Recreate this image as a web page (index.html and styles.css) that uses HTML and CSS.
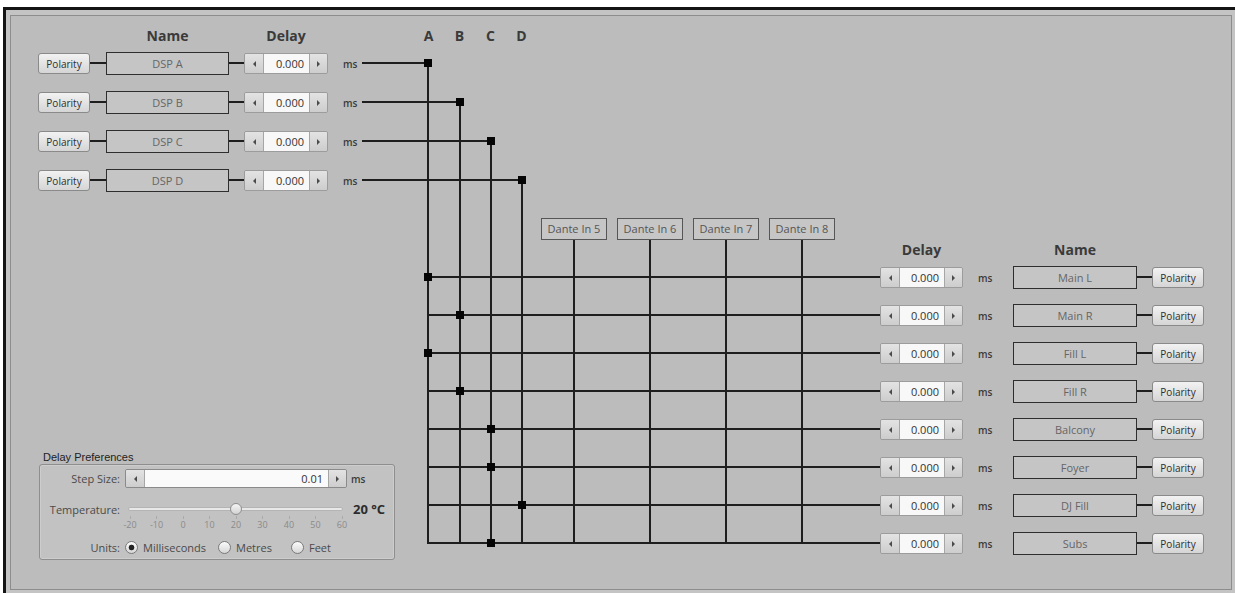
FILE: index.html
```html
<!DOCTYPE html>
<html>
<head>
    <title>Delay Matrix</title>
    <link rel="stylesheet" href="styles.css">
</head>
<body>
<div class="window">
    <div class="panel">
        <!-- routing wires, drawn in page coordinates -->
        <svg class="wires" width="1220" height="573" viewBox="11 16 1220 573">
            <g stroke="#1e1e1e" stroke-width="2" stroke-linecap="square" fill="none">
                <path d="M363 63H428 M363 102H460 M363 141H491 M363 180H522"/>
                <path d="M428 63V543 M460 102V543 M491 141V543 M522 180V543"/>
                <path d="M574 240V543 M650 240V543 M726 240V543 M802 240V543"/>
                <path d="M428 277H879 M428 315H879 M428 353H879 M428 391H879 M428 429H879 M428 467H879 M428 505H879 M428 543H879"/>
            </g>
            <g fill="#050505">
                <rect x="424" y="59" width="8" height="8"/>
                <rect x="456" y="98" width="8" height="8"/>
                <rect x="487" y="137" width="8" height="8"/>
                <rect x="518" y="176" width="8" height="8"/>
                <rect x="424" y="273" width="8" height="8"/>
                <rect x="456" y="311" width="8" height="8"/>
                <rect x="424" y="349" width="8" height="8"/>
                <rect x="456" y="387" width="8" height="8"/>
                <rect x="487" y="425" width="8" height="8"/>
                <rect x="487" y="463" width="8" height="8"/>
                <rect x="518" y="501" width="8" height="8"/>
                <rect x="487" y="539" width="8" height="8"/>
            </g>
        </svg>

        <div class="inputs">
            <div class="col-head">
                <span class="head-name">Name</span>
                <span class="head-delay">Delay</span>
            </div>
            <div class="chan-list">
                <div class="chan">
                    <button class="polarity">Polarity</button><span class="wire"></span>
                    <div class="name-box">DSP A</div><span class="wire"></span>
                    <div class="spin"><span class="arrow left"></span><span class="value">0.000</span><span class="arrow right"></span></div>
                    <span class="unit">ms</span>
                </div>
                <div class="chan">
                    <button class="polarity">Polarity</button><span class="wire"></span>
                    <div class="name-box">DSP B</div><span class="wire"></span>
                    <div class="spin"><span class="arrow left"></span><span class="value">0.000</span><span class="arrow right"></span></div>
                    <span class="unit">ms</span>
                </div>
                <div class="chan">
                    <button class="polarity">Polarity</button><span class="wire"></span>
                    <div class="name-box">DSP C</div><span class="wire"></span>
                    <div class="spin"><span class="arrow left"></span><span class="value">0.000</span><span class="arrow right"></span></div>
                    <span class="unit">ms</span>
                </div>
                <div class="chan">
                    <button class="polarity">Polarity</button><span class="wire"></span>
                    <div class="name-box">DSP D</div><span class="wire"></span>
                    <div class="spin"><span class="arrow left"></span><span class="value">0.000</span><span class="arrow right"></span></div>
                    <span class="unit">ms</span>
                </div>
            </div>

            <div class="prefs">
                <div class="prefs-title">Delay Preferences</div>
                <div class="prefs-box">
                    <div class="pref-row step-row">
                        <span class="pref-label">Step Size:</span>
                        <div class="spin step-spin"><span class="arrow left"></span><span class="value">0.01</span><span class="arrow right"></span></div>
                        <span class="unit step-unit">ms</span>
                    </div>
                    <div class="pref-row temp-row">
                        <span class="pref-label">Temperature:</span>
                        <div class="slider"><span class="track"></span><span class="thumb"></span></div>
                        <span class="temp-value">20 °C</span>
                    </div>
                    <div class="ticks">
                        <span class="tick"><i></i>-20</span>
                        <span class="tick"><i></i>-10</span>
                        <span class="tick"><i></i>0</span>
                        <span class="tick"><i></i>10</span>
                        <span class="tick"><i></i>20</span>
                        <span class="tick"><i></i>30</span>
                        <span class="tick"><i></i>40</span>
                        <span class="tick"><i></i>50</span>
                        <span class="tick"><i></i>60</span>
                    </div>
                    <div class="pref-row units-row">
                        <span class="pref-label">Units:</span>
                        <label class="radio opt-ms"><span class="dot checked"></span>Milliseconds</label>
                        <label class="radio opt-m"><span class="dot"></span>Metres</label>
                        <label class="radio"><span class="dot"></span>Feet</label>
                    </div>
                </div>
            </div>
        </div>

        <div class="bus">
            <div class="bus-head">
                <span>A</span><span>B</span><span>C</span><span>D</span>
            </div>
            <div class="dante-row">
                <div class="dante">Dante In 5</div>
                <div class="dante">Dante In 6</div>
                <div class="dante">Dante In 7</div>
                <div class="dante">Dante In 8</div>
            </div>
        </div>

        <div class="outputs">
            <div class="col-head">
                <span class="head-delay out">Delay</span>
                <span class="head-name out">Name</span>
            </div>
            <div class="chan-list out">
                <div class="chan">
                    <div class="spin"><span class="arrow left"></span><span class="value">0.000</span><span class="arrow right"></span></div>
                    <span class="unit">ms</span>
                    <div class="name-box out">Main L</div><span class="wire"></span>
                    <button class="polarity">Polarity</button>
                </div>
                <div class="chan">
                    <div class="spin"><span class="arrow left"></span><span class="value">0.000</span><span class="arrow right"></span></div>
                    <span class="unit">ms</span>
                    <div class="name-box out">Main R</div><span class="wire"></span>
                    <button class="polarity">Polarity</button>
                </div>
                <div class="chan">
                    <div class="spin"><span class="arrow left"></span><span class="value">0.000</span><span class="arrow right"></span></div>
                    <span class="unit">ms</span>
                    <div class="name-box out">Fill L</div><span class="wire"></span>
                    <button class="polarity">Polarity</button>
                </div>
                <div class="chan">
                    <div class="spin"><span class="arrow left"></span><span class="value">0.000</span><span class="arrow right"></span></div>
                    <span class="unit">ms</span>
                    <div class="name-box out">Fill R</div><span class="wire"></span>
                    <button class="polarity">Polarity</button>
                </div>
                <div class="chan">
                    <div class="spin"><span class="arrow left"></span><span class="value">0.000</span><span class="arrow right"></span></div>
                    <span class="unit">ms</span>
                    <div class="name-box out">Balcony</div><span class="wire"></span>
                    <button class="polarity">Polarity</button>
                </div>
                <div class="chan">
                    <div class="spin"><span class="arrow left"></span><span class="value">0.000</span><span class="arrow right"></span></div>
                    <span class="unit">ms</span>
                    <div class="name-box out">Foyer</div><span class="wire"></span>
                    <button class="polarity">Polarity</button>
                </div>
                <div class="chan">
                    <div class="spin"><span class="arrow left"></span><span class="value">0.000</span><span class="arrow right"></span></div>
                    <span class="unit">ms</span>
                    <div class="name-box out">DJ Fill</div><span class="wire"></span>
                    <button class="polarity">Polarity</button>
                </div>
                <div class="chan">
                    <div class="spin"><span class="arrow left"></span><span class="value">0.000</span><span class="arrow right"></span></div>
                    <span class="unit">ms</span>
                    <div class="name-box out">Subs</div><span class="wire"></span>
                    <button class="polarity">Polarity</button>
                </div>
            </div>
        </div>
    </div>
</div>
</body>
</html>
```

FILE: styles.css
```css
* {
    box-sizing: border-box;
}

body {
    margin: 0;
    background: #fff;
    font-family: "Open Sans", sans-serif;
    font-size: 11px;
    color: #333;
    overflow: hidden;
}

.window {
    margin: 7px 0 0 3px;
    border-top: 3px solid #141414;
    border-left: 3px solid #141414;
    background: #c4c4c4;
    padding: 5px 0 10px 4px;
}

.panel {
    position: relative;
    width: 1222px;
    height: 575px;
    border: 1px solid #8d8d8d;
    background: #bcbcbc;
    display: grid;
    grid-template-columns: 357px 1fr 324px;
    padding: 12px 27px 29px 27px;
}

.wires {
    position: absolute;
    left: 0;
    top: 0;
}

.inputs, .bus, .outputs {
    position: relative;
    z-index: 1;
    display: flex;
    flex-direction: column;
}

/* headers */
.col-head {
    display: flex;
    height: 16px;
    line-height: 16px;
    font-size: 14px;
    font-weight: 700;
    color: #3a3a3a;
}

.head-name {
    width: 123px;
    margin-left: 68px;
    text-align: center;
}

.head-delay {
    width: 84px;
    margin-left: 15px;
    text-align: center;
}

.head-delay.out {
    width: 83px;
    margin-left: 0;
}

.head-name.out {
    width: 124px;
    margin-left: 50px;
}

/* channel rows */
.chan-list {
    display: flex;
    flex-direction: column;
    gap: 16px;
    margin-top: 8px;
}

.chan-list.out {
    gap: 15px;
}

.outputs .col-head {
    margin-top: 214px;
}

.chan {
    display: flex;
    align-items: center;
    height: 23px;
}

.wire {
    align-self: flex-start;
    margin-top: 10px;
    width: 15px;
    height: 2px;
    background: #1e1e1e;
}

.chan .polarity + .wire {
    width: 16px;
}

.polarity {
    width: 52px;
    height: 21px;
    padding: 0;
    border: 1px solid #8a8a8a;
    border-radius: 3px;
    background: linear-gradient(#f2f2f2, #d5d5d5);
    font-family: "Open Sans", sans-serif;
    font-size: 10px;
    color: #2e2e2e;
}

.name-box {
    width: 123px;
    height: 23px;
    border: 1px solid #2e2e2e;
    background: #c5c5c5;
    color: #666;
    text-align: center;
    line-height: 21px;
}

.name-box.out {
    width: 124px;
    margin-left: 20px;
}

.spin {
    display: flex;
    width: 84px;
    height: 21px;
    border: 1px solid #9c9c9c;
    border-radius: 2px;
    overflow: hidden;
}

.outputs .spin {
    width: 83px;
}

.arrow {
    width: 19px;
    display: flex;
    align-items: center;
    justify-content: center;
    background: linear-gradient(#e3e3e3, #cdcdcd);
}

.arrow.left {
    border-right: 1px solid #a6a6a6;
}

.arrow.right {
    width: 18px;
    border-left: 1px solid #a6a6a6;
}

.arrow::before {
    content: "";
    border-top: 3px solid transparent;
    border-bottom: 3px solid transparent;
}

.arrow.left::before {
    border-right: 3px solid #4a4a4a;
}

.arrow.right::before {
    border-left: 3px solid #4a4a4a;
}

.value {
    flex: 1;
    background: #f8f8f8;
    text-align: right;
    padding-right: 5px;
    line-height: 19px;
    color: #333;
}

.unit {
    width: 15px;
    margin-left: 15px;
    font-size: 10px;
    font-weight: 600;
    color: #3a3a3a;
    white-space: nowrap;
}

/* middle bus area */
.bus-head {
    display: flex;
    padding-left: 18px;
    height: 16px;
    line-height: 16px;
    font-size: 14px;
    font-weight: 700;
    color: #3a3a3a;
}

.bus-head span {
    width: 31px;
    text-align: center;
}

.dante-row {
    display: flex;
    gap: 10px;
    margin: 174px 0 0 146px;
}

.dante {
    width: 66px;
    height: 22px;
    border: 1px solid #565656;
    background: #c6c6c6;
    color: #555;
    text-align: center;
    line-height: 20px;
    white-space: nowrap;
}

/* delay preferences */
.prefs {
    margin-top: auto;
    margin-left: 1px;
    width: 356px;
}

.prefs-title {
    font-family: "Liberation Sans", Arial, sans-serif;
    font-size: 11px;
    line-height: 12px;
    color: #222;
    padding-left: 4px;
    margin-bottom: 1px;
}

.prefs-box {
    border: 1px solid #8e8e8e;
    border-radius: 3px;
    background: #c2c2c2;
    box-shadow: inset 0 0 0 1px #cdcdcd;
    padding: 4px 0 5px;
}

.pref-row {
    display: flex;
    align-items: center;
}

.pref-label {
    width: 80px;
    margin-right: 5px;
    text-align: right;
    color: #4a4a4a;
}

.step-row {
    height: 19px;
}

.step-spin {
    width: 222px;
    height: 19px;
    border-color: #8a8a8a;
}

.step-spin .value {
    line-height: 17px;
    background: #fafafa;
}

.step-unit {
    margin-left: 4px;
}

.temp-row {
    height: 14px;
    margin-top: 14px;
}

.slider {
    position: relative;
    width: 215px;
    height: 14px;
    margin-left: 3px;
}

.track {
    position: absolute;
    left: 0;
    right: 0;
    top: 5px;
    height: 4px;
    border: 1px solid #b4b4b4;
    border-radius: 2px;
    background: #e8e8e8;
}

.thumb {
    position: absolute;
    left: 102px;
    top: 1px;
    width: 12px;
    height: 12px;
    border: 1px solid #8e8e8e;
    border-radius: 50%;
    background: linear-gradient(#f6f6f6, #d2d2d2);
}

.temp-value {
    margin-left: 10px;
    font-size: 13px;
    font-weight: 700;
    color: #2c2c2c;
}

.ticks {
    display: flex;
    justify-content: space-between;
    width: 212px;
    margin-left: 90px;
}

.tick {
    width: 0;
    display: flex;
    flex-direction: column;
    align-items: center;
    font-size: 9px;
    line-height: 11px;
    color: #8a8a8a;
    white-space: nowrap;
}

.tick i {
    width: 1px;
    height: 3px;
    background: #aaa;
}

.units-row {
    height: 14px;
    margin-top: 10px;
}

.radio {
    display: flex;
    align-items: center;
    color: #4a4a4a;
}

.opt-ms {
    width: 93px;
}

.opt-m {
    width: 73px;
}

.dot {
    width: 13px;
    height: 13px;
    margin-right: 5px;
    border: 1px solid #7a7a7a;
    border-radius: 50%;
    background: linear-gradient(#fbfbfb, #d6d6d6);
}

.dot.checked {
    background: radial-gradient(circle, #222 2.5px, transparent 3.2px), linear-gradient(#fbfbfb, #d6d6d6);
}
```
